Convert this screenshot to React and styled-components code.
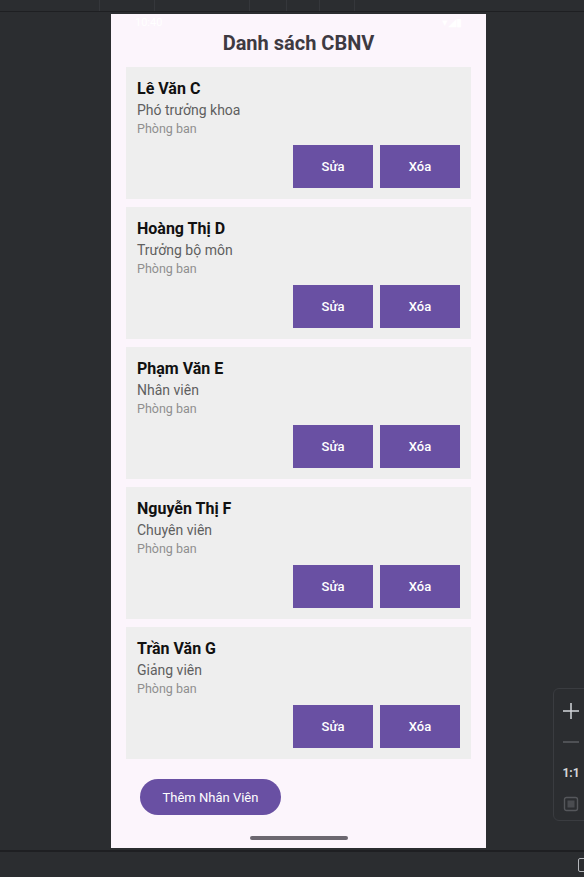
import React from "react";
import styled, { createGlobalStyle } from "styled-components";

const employees = [
  { name: "Lê Văn C", title: "Phó trưởng khoa" },
  { name: "Hoàng Thị D", title: "Trưởng bộ môn" },
  { name: "Phạm Văn E", title: "Nhân viên" },
  { name: "Nguyễn Thị F", title: "Chuyên viên" },
  { name: "Trần Văn G", title: "Giảng viên" },
];

const GlobalStyle = createGlobalStyle`
  html, body {
    margin: 0;
    padding: 0;
    background: #2b2d30;
  }
  * { box-sizing: border-box; }
`;

const Ide = styled.div`
  width: 584px;
  height: 877px;
  display: flex;
  flex-direction: column;
  position: relative;
  overflow: hidden;
  background: #2b2d30;
  font-family: Roboto, "Noto Sans", sans-serif;
`;

const TopStrip = styled.div`
  height: 12px;
  display: flex;
  border-bottom: 1px solid #1e1f22;
`;

const TopTab = styled.div`
  width: ${(p) => p.w}px;
  border-right: 1px solid #35373b;
`;

const Stage = styled.div`
  flex: 1;
  display: flex;
  padding: 2px 0 0 111px;
`;

const Phone = styled.div`
  width: 375px;
  height: 834px;
  background: #fcf5fc;
  display: flex;
  flex-direction: column;
`;

const StatusBar = styled.div`
  height: 16px;
  display: flex;
  justify-content: space-between;
  align-items: center;
  padding: 0 24px;
  font-size: 11px;
  color: #ffffff;
`;

const Title = styled.h1`
  margin: 0 0 11px;
  height: 26px;
  line-height: 26px;
  text-align: center;
  font-size: 20px;
  font-weight: 700;
  color: #3e3a42;
`;

const List = styled.div`
  display: flex;
  flex-direction: column;
  gap: 8px;
  padding: 0 15px;
`;

const Card = styled.div`
  background: #eeeeee;
  padding: 11px;
  display: flex;
  flex-direction: column;
`;

const Name = styled.div`
  font-size: 16px;
  line-height: 22px;
  font-weight: 700;
  color: #111111;
`;

const Role = styled.div`
  font-size: 14px;
  line-height: 20px;
  color: #5f5f5f;
`;

const Dept = styled.div`
  font-size: 12.5px;
  line-height: 18px;
  color: #8f8f8f;
`;

const Actions = styled.div`
  margin-top: 7px;
  display: flex;
  justify-content: flex-end;
  gap: 7px;
`;

const ActionButton = styled.button`
  width: 80px;
  height: 43px;
  border: none;
  background: #6950a3;
  color: #ffffff;
  font-family: inherit;
  font-size: 13px;
  font-weight: 500;
  padding: 0;
`;

const AddButton = styled.button`
  margin: 20px 0 0 29px;
  width: 141px;
  height: 36px;
  border: none;
  border-radius: 18px;
  background: #6950a3;
  color: #ffffff;
  font-family: inherit;
  font-size: 13px;
  font-weight: 400;
  align-self: flex-start;
`;

const HomeBar = styled.div`
  margin: auto auto 8px;
  width: 98px;
  height: 4px;
  border-radius: 2px;
  background: #6c6770;
`;

const BottomStrip = styled.div`
  height: 27px;
  border-top: 2px solid #1e1f22;
  display: flex;
  justify-content: flex-end;
  align-items: center;
`;

const BottomIcon = styled.div`
  width: 10px;
  height: 14px;
  margin-right: -4px;
  border: 1px solid #b4b6ba;
  border-radius: 2px;
`;

const ZoomPanel = styled.div`
  position: absolute;
  left: 553px;
  top: 688px;
  width: 40px;
  height: 133px;
  border: 1px solid #3a3c40;
  border-radius: 6px;
  display: flex;
  flex-direction: column;
  align-items: flex-start;
  padding: 6px 0 0 6px;
  color: #c9cbcf;
`;

const ZoomItem = styled.div`
  width: 22px;
  height: 33px;
  display: flex;
  align-items: center;
  justify-content: center;
  font-size: 12px;
  font-weight: 700;
  color: #d4d6da;
`;

const FitIcon = () => (
  <svg width="16" height="16" viewBox="0 0 16 16">
    <rect x="1.5" y="1.5" width="13" height="13" rx="2" fill="none" stroke="#55575b" strokeWidth="1.4" />
    <rect x="4.5" y="4.5" width="7" height="7" fill="#4a4c50" />
  </svg>
);

const App = () => (
  <>
    <GlobalStyle />
    <Ide>
      <TopStrip>
        <TopTab w={100} />
        <TopTab w={55} />
        <TopTab w={95} />
        <TopTab w={37} />
        <TopTab w={33} />
        <TopTab w={35} />
      </TopStrip>
      <Stage>
        <Phone>
          <StatusBar>
            <span>10:40</span>
            <span>▾◢▮</span>
          </StatusBar>
          <Title>Danh sách CBNV</Title>
          <List>
            {employees.map((e) => (
              <Card key={e.name}>
                <Name>{e.name}</Name>
                <Role>{e.title}</Role>
                <Dept>Phòng ban</Dept>
                <Actions>
                  <ActionButton>Sửa</ActionButton>
                  <ActionButton>Xóa</ActionButton>
                </Actions>
              </Card>
            ))}
          </List>
          <AddButton>Thêm Nhân Viên</AddButton>
          <HomeBar />
        </Phone>
      </Stage>
      <BottomStrip>
        <BottomIcon />
      </BottomStrip>
      <ZoomPanel>
        <ZoomItem>
          <svg width="18" height="18" viewBox="0 0 18 18">
            <path d="M9 1v16M1 9h16" stroke="#d4d6da" strokeWidth="1.5" />
          </svg>
        </ZoomItem>
        <ZoomItem>
          <svg width="18" height="18" viewBox="0 0 18 18">
            <path d="M1 9h16" stroke="#5c5e62" strokeWidth="1.5" />
          </svg>
        </ZoomItem>
        <ZoomItem>1:1</ZoomItem>
        <ZoomItem>
          <FitIcon />
        </ZoomItem>
      </ZoomPanel>
    </Ide>
  </>
);

export default App;
